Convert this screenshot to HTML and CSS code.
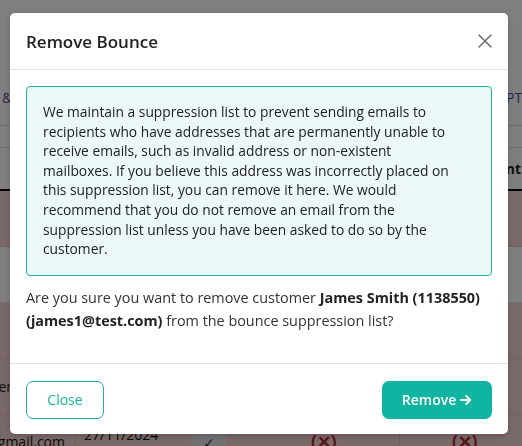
FILE: index.html
```html
<!DOCTYPE html>
<html lang="en">
<head>
<meta charset="utf-8">
<title>Remove Bounce</title>
<link rel="stylesheet" href="styles.css">
</head>
<body>
<div class="page">
  <div class="top"></div>
  <div class="tabs"><span class="tab-left">&amp;</span><span class="tab-right">PTA</span></div>
  <div class="filter"></div>
  <div class="thead"><span class="th-right">Sent</span></div>
  <div class="row rose"></div>
  <div class="row plain"></div>
  <div class="row rose"></div>
  <div class="row rose"><span class="cell-left">Customer</span></div>
  <div class="row rose last">
    <span class="c c1">james@gmail.com</span>
    <span class="c c2">27/11/2024</span>
    <span class="c c4">✓</span>
    <span class="c c5"></span>
    <span class="c c6">(✕)</span>
    <span class="c c8">(✕)</span>
  </div>
</div>

<div class="backdrop">
  <div class="modal" role="dialog">
    <div class="modal-header">
      <h2 class="modal-title">Remove Bounce</h2>
      <button class="close-x" aria-label="Close">
        <svg width="14" height="14" viewBox="0 0 14 14"><path d="M1 1 L13 13 M13 1 L1 13" stroke="#6b6b6b" stroke-width="1.5" stroke-linecap="round" fill="none"/></svg>
      </button>
    </div>
    <div class="modal-body">
      <p class="alert">We maintain a suppression list to prevent sending emails to<br>
recipients who have addresses that are permanently unable to<br>
receive emails, such as invalid address or non-existent<br>
mailboxes. If you believe this address was incorrectly placed on<br>
this suppression list, you can remove it here. We would<br>
recommend that you do not remove an email from the<br>
suppression list unless you have been asked to do so by the<br>
customer.</p>
      <p class="question">Are you sure you want to remove customer <strong>James Smith (1138550)</strong><br><strong>(james1@test.com)</strong> from the bounce suppression list?</p>
    </div>
    <div class="modal-footer">
      <button class="btn btn-outline">Close</button>
      <button class="btn btn-primary">Remove <svg class="arrow" width="12" height="12" viewBox="0 0 12 12"><path d="M1 6 H10.2 M6.2 2 L10.2 6 L6.2 10" stroke="#fff" stroke-width="2" stroke-linecap="round" stroke-linejoin="round" fill="none"/></svg></button>
    </div>
  </div>
</div>
</body>
</html>
```
FILE: styles.css
```css
* { box-sizing: border-box; }
html, body { margin: 0; padding: 0; }
body {
  width: 522px;
  height: 446px;
  overflow: hidden;
  background: #fff;
  font-family: "Open Sans", "Noto Sans", sans-serif;
  color: #222;
}

/* underlying page */
.page { width: 522px; }
.top { height: 70px; background: #fff; }
.tabs {
  height: 56px;
  border-bottom: 1px solid #dcdcdc;
  display: flex;
  justify-content: space-between;
  align-items: center;
  font-size: 14px;
  color: #5c3d99;
  overflow: hidden;
}
.tab-left { margin-left: 2px; }
.tab-right { margin-right: -9px; }
.filter { height: 22px; border-bottom: 1px solid #dcdcdc; }
.thead {
  height: 43px;
  border-bottom: 2px solid #000;
  display: flex;
  justify-content: flex-end;
  align-items: center;
  font-size: 14px;
  font-weight: 700;
  overflow: hidden;
}
.th-right { margin-right: 1px; }
.row {
  height: 56px;
  border-bottom: 1px solid #e6c0c0;
  display: flex;
  align-items: center;
  font-size: 14px;
  overflow: hidden;
}
.rose { background: #f4d2d2; }
.plain { background: #fff; border-bottom-color: #e6e6e6; }
.cell-left { margin-left: -52px; }
.row.last { align-items: flex-start; }
.c { display: flex; height: 56px; line-height: 16px; flex: none; }
.c1 { width: 75px; justify-content: flex-end; padding-top: 19px; padding-right: 10px; color: #111; white-space: nowrap; }
.c2 { width: 116px; border-left: 1px solid #e0bcbc; padding-left: 8px; padding-top: 12px; color: #111; }
.c4 { width: 35px; background: #e3e3e3; justify-content: center; color: #3c2a70; padding-top: 20px; }
.c5 { width: 85px; }
.c6 { width: 88px; color: #b3262e; font-weight: 700; font-size: 17px; padding-top: 19px; }
.c8 { width: 123px; border-left: 1px solid #e0bcbc; color: #b3262e; font-weight: 700; font-size: 17px; padding-left: 52px; padding-top: 19px; }

/* modal overlay */
.backdrop {
  position: fixed;
  inset: 0;
  background: rgba(0, 0, 0, 0.5);
  padding: 13px 0 0 10px;
}
.modal {
  width: 498px;
  background: #fff;
  border-radius: 5px;
  box-shadow: 0 2px 6px rgba(0, 0, 0, 0.2);
}
.modal-header {
  height: 57px;
  padding: 0 16px;
  border-bottom: 1px solid #e2e2e2;
  display: flex;
  align-items: center;
  justify-content: space-between;
}
.modal-title {
  margin: 0;
  font-size: 17px;
  font-weight: 600;
  color: #222;
  padding-top: 1px;
}
.close-x {
  border: 0;
  background: none;
  padding: 0;
  width: 14px;
  height: 14px;
  display: flex;
}
.modal-body { padding: 16px 16px 31px; }
.alert {
  margin: 0;
  border: 1px solid #1cb5a2;
  background: #ecf7f7;
  border-radius: 4px;
  padding: 15px 16px 16px;
  font-size: 13.8px;
  line-height: 19.6px;
  color: #222;
  white-space: nowrap;
}
.question {
  margin: 10px 0 0;
  font-size: 14.4px;
  line-height: 23px;
  color: #333;
  white-space: nowrap;
}
.question strong { font-weight: 700; color: #222; }
.modal-footer {
  border-top: 1px solid #e2e2e2;
  padding: 17px 16px 15px;
  display: flex;
  justify-content: space-between;
}
.btn {
  height: 38px;
  border-radius: 7px;
  font-family: inherit;
  font-size: 14px;
  font-weight: 500;
  display: flex;
  align-items: center;
  justify-content: center;
  gap: 4px;
}
.btn-outline {
  width: 78px;
  background: #fff;
  border: 1px solid #17b3a0;
  color: #17b3a0;
}
.btn-primary {
  width: 110px;
  background: #10b5a1;
  border: 0;
  color: #fff;
  font-weight: 600;
}
.arrow { display: block; }
```
